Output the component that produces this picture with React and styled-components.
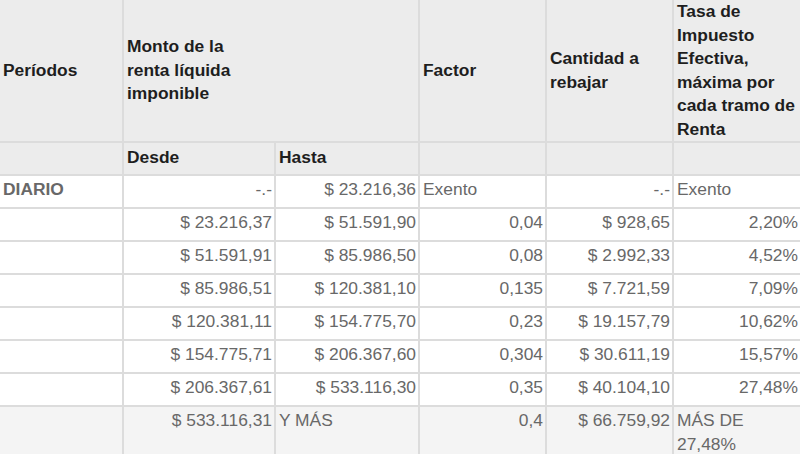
import React from "react";
import styled, { createGlobalStyle } from "styled-components";

const GlobalStyle = createGlobalStyle`
  html, body {
    margin: 0;
    padding: 0;
    background: #ffffff;
    overflow: hidden;
  }
`;

// Table shell
const Table = styled.table`
  width: 800px;
  table-layout: fixed;
  border-collapse: collapse;
  border-style: hidden;
  font-family: "Liberation Sans", Arial, sans-serif;
  font-size: 17.4px;
`;

const HeadCell = styled.th`
  background: #ececec;
  color: #1e1e1e;
  font-weight: bold;
  text-align: left;
  vertical-align: middle;
  border: 2px solid #dcdcdc;
  padding: ${(p) => (p.$sub ? "3px 3px 4px" : "0 3px")};
  line-height: 23.5px;
  height: ${(p) => (p.$sub ? "auto" : "141px")};
`;

const Row = styled.tr`
  background: ${(p) => (p.$shade ? "#f4f4f4" : "#ffffff")};
`;

const Cell = styled.td`
  color: #686868;
  border: 2px solid #dcdcdc;
  padding: 1px 2px 6px 3px;
  line-height: 24px;
  vertical-align: top;
  text-align: ${(p) => (p.$num ? "right" : "left")};
  font-weight: ${(p) => (p.$bold ? "bold" : "normal")};
  white-space: ${(p) => (p.$nowrap ? "nowrap" : "normal")};
`;

const rows = [
  ["$ 23.216,37", "$ 51.591,90", "0,04", "$ 928,65", "2,20%"],
  ["$ 51.591,91", "$ 85.986,50", "0,08", "$ 2.992,33", "4,52%"],
  ["$ 85.986,51", "$ 120.381,10", "0,135", "$ 7.721,59", "7,09%"],
  ["$ 120.381,11", "$ 154.775,70", "0,23", "$ 19.157,79", "10,62%"],
  ["$ 154.775,71", "$ 206.367,60", "0,304", "$ 30.611,19", "15,57%"],
  ["$ 206.367,61", "$ 533.116,30", "0,35", "$ 40.104,10", "27,48%"],
];

const App = () => {
  return (
    <>
      <GlobalStyle />
      <Table>
        <colgroup>
          <col style={{ width: 123 }} />
          <col style={{ width: 152 }} />
          <col style={{ width: 144 }} />
          <col style={{ width: 127 }} />
          <col style={{ width: 127 }} />
          <col style={{ width: 127 }} />
        </colgroup>
        <thead>
          <tr>
            <HeadCell>Períodos</HeadCell>
            <HeadCell colSpan={2}>
              Monto de la
              <br />
              renta líquida
              <br />
              imponible
            </HeadCell>
            <HeadCell>Factor</HeadCell>
            <HeadCell>Cantidad a rebajar</HeadCell>
            <HeadCell>
              Tasa de Impuesto Efectiva, máxima por cada tramo de Renta
            </HeadCell>
          </tr>
          <tr>
            <HeadCell $sub />
            <HeadCell $sub>Desde</HeadCell>
            <HeadCell $sub>Hasta</HeadCell>
            <HeadCell $sub />
            <HeadCell $sub />
            <HeadCell $sub />
          </tr>
        </thead>
        <tbody>
          <Row>
            <Cell $bold>DIARIO</Cell>
            <Cell $num>-.-</Cell>
            <Cell $num>$ 23.216,36</Cell>
            <Cell>Exento</Cell>
            <Cell $num>-.-</Cell>
            <Cell>Exento</Cell>
          </Row>
          {rows.map((r) => (
            <Row key={r[0]}>
              <Cell />
              {r.map((v) => (
                <Cell key={v} $num>
                  {v}
                </Cell>
              ))}
            </Row>
          ))}
          <Row $shade>
            <Cell />
            <Cell $num $nowrap>
              $ 533.116,31
            </Cell>
            <Cell>Y MÁS</Cell>
            <Cell $num>0,4</Cell>
            <Cell $num>$ 66.759,92</Cell>
            <Cell>
              MÁS DE
              <br />
              27,48%
            </Cell>
          </Row>
        </tbody>
      </Table>
    </>
  );
};

export default App;
